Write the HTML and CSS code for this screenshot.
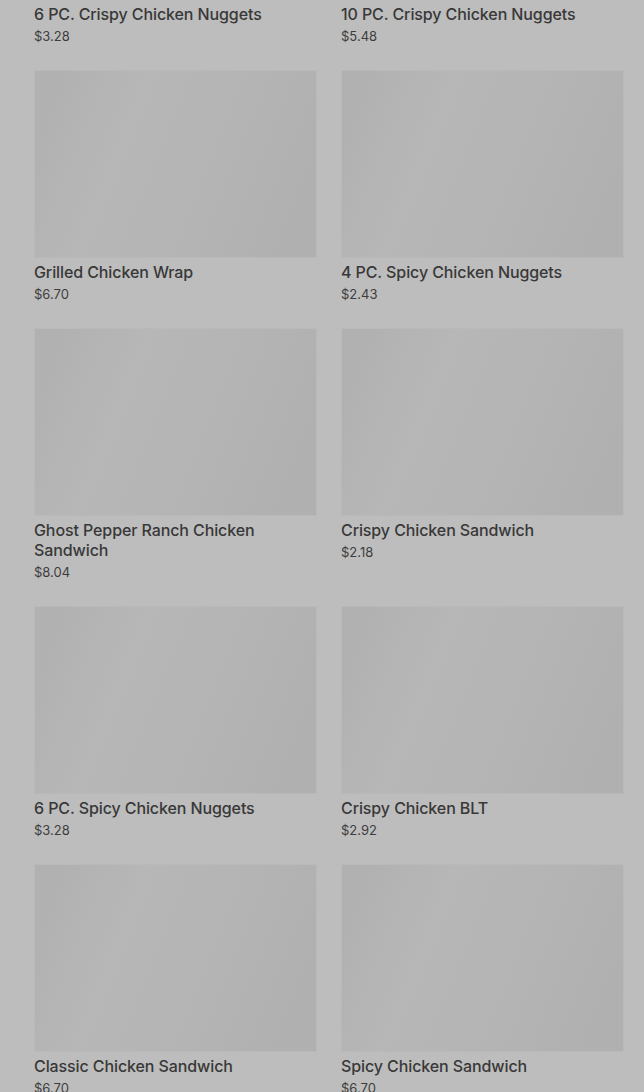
FILE: index.html
```html
<!DOCTYPE html>
<html lang="en">
<head>
  <meta charset="UTF-8"/>
  <meta name="viewport" content="width=device-width, initial-scale=1.0"/>
  <title>Menu - Chicken</title>
  <link rel="stylesheet" href="styles.css">
</head>
<body>
  <div class="menu-grid">
    <div class="item">
      <div class="item-img"></div>
      <div class="item-name">6 PC. Crispy Chicken Nuggets</div>
      <div class="item-price">$3.28</div>
    </div>
    <div class="item">
      <div class="item-img"></div>
      <div class="item-name">10 PC. Crispy Chicken Nuggets</div>
      <div class="item-price">$5.48</div>
    </div>
    <div class="item">
      <div class="item-img"></div>
      <div class="item-name">Grilled Chicken Wrap</div>
      <div class="item-price">$6.70</div>
    </div>
    <div class="item">
      <div class="item-img"></div>
      <div class="item-name">4 PC. Spicy Chicken Nuggets</div>
      <div class="item-price">$2.43</div>
    </div>
    <div class="item">
      <div class="item-img"></div>
      <div class="item-name">Ghost Pepper Ranch Chicken Sandwich</div>
      <div class="item-price">$8.04</div>
    </div>
    <div class="item">
      <div class="item-img"></div>
      <div class="item-name">Crispy Chicken Sandwich</div>
      <div class="item-price">$2.18</div>
    </div>
    <div class="item">
      <div class="item-img"></div>
      <div class="item-name">6 PC. Spicy Chicken Nuggets</div>
      <div class="item-price">$3.28</div>
    </div>
    <div class="item">
      <div class="item-img"></div>
      <div class="item-name">Crispy Chicken BLT</div>
      <div class="item-price">$2.92</div>
    </div>
    <div class="item">
      <div class="item-img"></div>
      <div class="item-name">Classic Chicken Sandwich</div>
      <div class="item-price">$6.70</div>
    </div>
    <div class="item">
      <div class="item-img"></div>
      <div class="item-name">Spicy Chicken Sandwich</div>
      <div class="item-price">$6.70</div>
    </div>
  </div>
</body>
</html>
```
FILE: styles.css
```css
:root {
  --bg: #bdbdbd;
  --img: #b3b3b3;
  --img-edge: #b9b9b9;
  --text: #383838;
}

html, body {
  margin: 0;
  background-color: var(--bg);
  overflow: hidden;
}

body {
  font-family: Inter, "Noto Sans", sans-serif;
  color: var(--text);
}

/* page is scrolled down a bit, first row image is out of view */
.menu-grid {
  display: grid;
  grid-template-columns: 1fr 1fr;
  column-gap: 24px;
  row-gap: 25px;
  padding: 0 20px 40px 34px;
  margin-top: -188px;
}

.item-img {
  height: 188px;
  box-sizing: border-box;
  border: 1px solid var(--img-edge);
  background: linear-gradient(112deg, #b1b1b1 8%, #b7b7b7 32%, #b5b5b5 52%, #b0b0b0 92%);
}

.item-name {
  margin-top: 4px;
  font-size: 16px;
  line-height: 20px;
  font-weight: 500;
  letter-spacing: -0.1px;
}

.item-price {
  margin-top: 3px;
  font-size: 13px;
  line-height: 18px;
  color: #3d3d3d;
}
```
